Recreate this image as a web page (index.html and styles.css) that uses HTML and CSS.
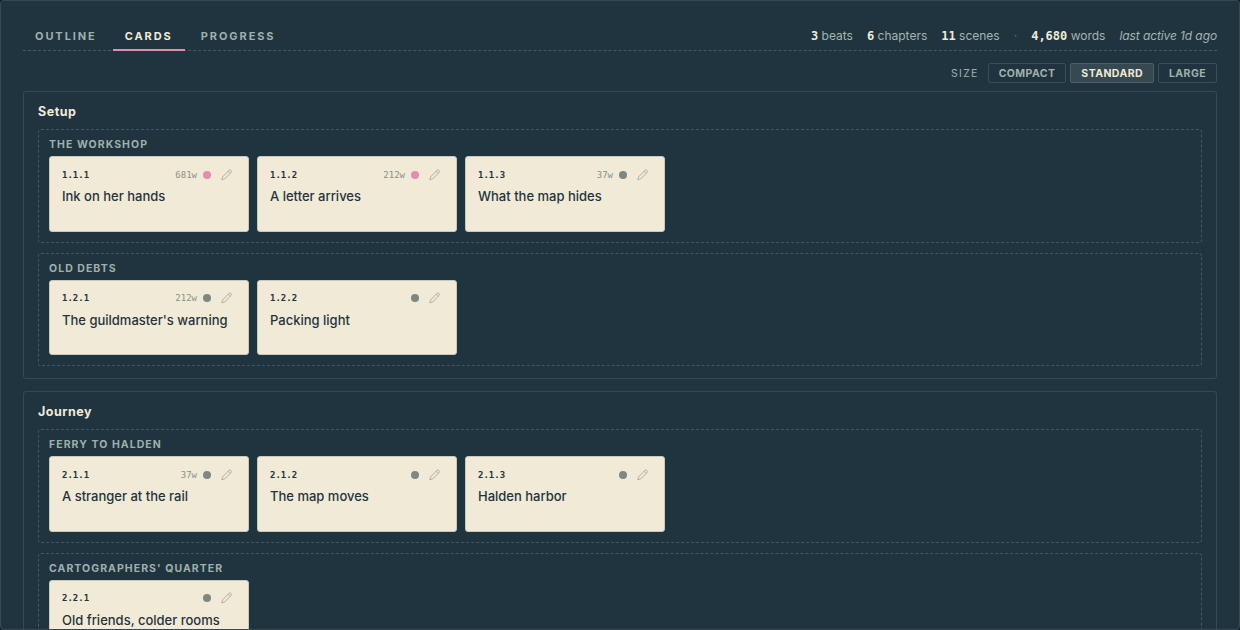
FILE: index.html
```
<!DOCTYPE html>
<html lang="en">
<head>
<meta charset="utf-8">
<title>Story cards</title>
<link rel="stylesheet" href="styles.css">
</head>
<body>
<svg width="0" height="0" class="defs"><symbol id="pencil" viewBox="0 0 12 12"><path d="M.8 10.8 1.6 7.9 8.1 1.2Q8.9.5 9.6 1.2L10.2 1.8Q10.9 2.5 10.2 3.3L3.7 10ZM7.1 2.2 9.2 4.3" fill="none" stroke="currentColor" stroke-width=".9" stroke-linejoin="round"/></symbol></svg>
<main class="app">
  <header class="header">
    <nav class="tabs"><a class="tab">OUTLINE</a><a class="tab active">CARDS</a><a class="tab">PROGRESS</a></nav>
    <div class="stats"><span><b>3</b> beats</span><span><b>6</b> chapters</span><span><b>11</b> scenes</span><span class="sep">·</span><span><b>4,680</b> words</span><em>last active 1d ago</em></div>
  </header>
  <div class="sizes"><span class="size-label">SIZE</span><button class="size">COMPACT</button><button class="size on">STANDARD</button><button class="size">LARGE</button></div>
  <section class="beat">
    <h2>Setup</h2>
    <div class="chapter">
      <h3>THE WORKSHOP</h3>
      <div class="cards">
        <article class="card"><div class="meta"><b>1.1.1</b><span>681w</span><i class="dot pink"></i><svg class="edit"><use href="#pencil"/></svg></div><p>Ink on her hands</p></article>
        <article class="card"><div class="meta"><b>1.1.2</b><span>212w</span><i class="dot pink"></i><svg class="edit"><use href="#pencil"/></svg></div><p>A letter arrives</p></article>
        <article class="card"><div class="meta"><b>1.1.3</b><span>37w</span><i class="dot"></i><svg class="edit"><use href="#pencil"/></svg></div><p>What the map hides</p></article>
      </div>
    </div>
    <div class="chapter">
      <h3>OLD DEBTS</h3>
      <div class="cards">
        <article class="card"><div class="meta"><b>1.2.1</b><span>212w</span><i class="dot"></i><svg class="edit"><use href="#pencil"/></svg></div><p>The guildmaster's warning</p></article>
        <article class="card"><div class="meta"><b>1.2.2</b><span></span><i class="dot"></i><svg class="edit"><use href="#pencil"/></svg></div><p>Packing light</p></article>
      </div>
    </div>
  </section>
  <section class="beat">
    <h2>Journey</h2>
    <div class="chapter">
      <h3>FERRY TO HALDEN</h3>
      <div class="cards">
        <article class="card"><div class="meta"><b>2.1.1</b><span>37w</span><i class="dot"></i><svg class="edit"><use href="#pencil"/></svg></div><p>A stranger at the rail</p></article>
        <article class="card"><div class="meta"><b>2.1.2</b><span></span><i class="dot"></i><svg class="edit"><use href="#pencil"/></svg></div><p>The map moves</p></article>
        <article class="card"><div class="meta"><b>2.1.3</b><span></span><i class="dot"></i><svg class="edit"><use href="#pencil"/></svg></div><p>Halden harbor</p></article>
      </div>
    </div>
    <div class="chapter">
      <h3>CARTOGRAPHERS' QUARTER</h3>
      <div class="cards">
        <article class="card"><div class="meta"><b>2.2.1</b><span></span><i class="dot"></i><svg class="edit"><use href="#pencil"/></svg></div><p>Old friends, colder rooms</p></article>
      </div>
    </div>
  </section>
</main>
</body>
</html>
```
FILE: styles.css
```
* { box-sizing: border-box; }
body { margin: 0; height: 630px; overflow: hidden; background: #14242d; font-family: Inter, sans-serif; color: #f1ead6; }
.defs { display: block; }
.app { height: 630px; overflow: hidden; border: 1px solid #374a51; border-radius: 4px; background: #1f343f; padding: 22px 22px 0; }
.header { display: flex; justify-content: space-between; height: 28px; border-bottom: 1px dashed #465a5e; }
.tabs { display: flex; gap: 4px; height: 28px; }
.tab { padding: 0 12px; line-height: 26px; font-size: 11px; font-weight: 700; letter-spacing: 1.92px; color: #9fb0ac; border-bottom: 2px solid transparent; }
.tab.active { color: #f1ead6; border-color: #e78bae; }
.stats { display: flex; gap: 14px; font-size: 12px; line-height: 26px; color: #a5b5b0; }
.stats b { font-family: "DejaVu Sans Mono", monospace; font-weight: 700; color: #f1ead6; }
.stats .sep { color: #60736f; }
.stats em { letter-spacing: -.1px; }
.sizes { display: flex; justify-content: flex-end; align-items: center; gap: 4px; margin-top: 12px; height: 20px; }
.size-label { font-size: 10.5px; letter-spacing: 1.3px; color: #9fb0ac; margin-right: 5px; }
.size { height: 20px; padding: 1px 10px 0; background: transparent; border: 1px solid #3a4d54; border-radius: 2px; font: 700 10.5px/18px Inter, sans-serif; letter-spacing: .42px; color: #a0b1ad; }
.size.on { background: #364850; border-color: #4c5f64; color: #f1ead6; }
.beat { margin: 8px 0 12px; height: 288px; padding: 10px 14px 12px; border: 1px solid #354951; border-radius: 3px; }
.beat + .beat { margin-top: 12px; }
h2 { margin: 0 0 7px; height: 20px; font-size: 12.5px; line-height: 20px; font-weight: 700; letter-spacing: .5px; }
.chapter { height: 113.5px; padding: 7px 10px 10px; margin-bottom: 10px; border: 1px dashed #43575e; border-radius: 3px; }
h3 { margin: 0 0 3px; font-size: 10.5px; line-height: 16px; font-weight: 700; letter-spacing: 1.05px; color: #9fb0ac; }
.cards { display: flex; gap: 8px; }
.card { width: 200px; height: 75.5px; padding: 9.9px 12px; background: #f1ead6; border: 1px solid #c9c9bb; border-radius: 3px; color: #1f343f; }
.meta { display: flex; align-items: center; height: 16px; font: 9px/16px "DejaVu Sans Mono", monospace; }
.meta span { margin-left: auto; margin-right: 6px; color: #89918b; }
.dot { width: 8px; height: 8px; border-radius: 50%; background: #7c8884; }
.dot.pink { background: #e78bae; }
.edit { width: 12px; height: 12px; margin: 0 3.5px 0 9.5px; color: #a7aaa0; }
.card p { margin: 4.3px 0 0; font-size: 13px; line-height: 18px; font-weight: 500; }
```
